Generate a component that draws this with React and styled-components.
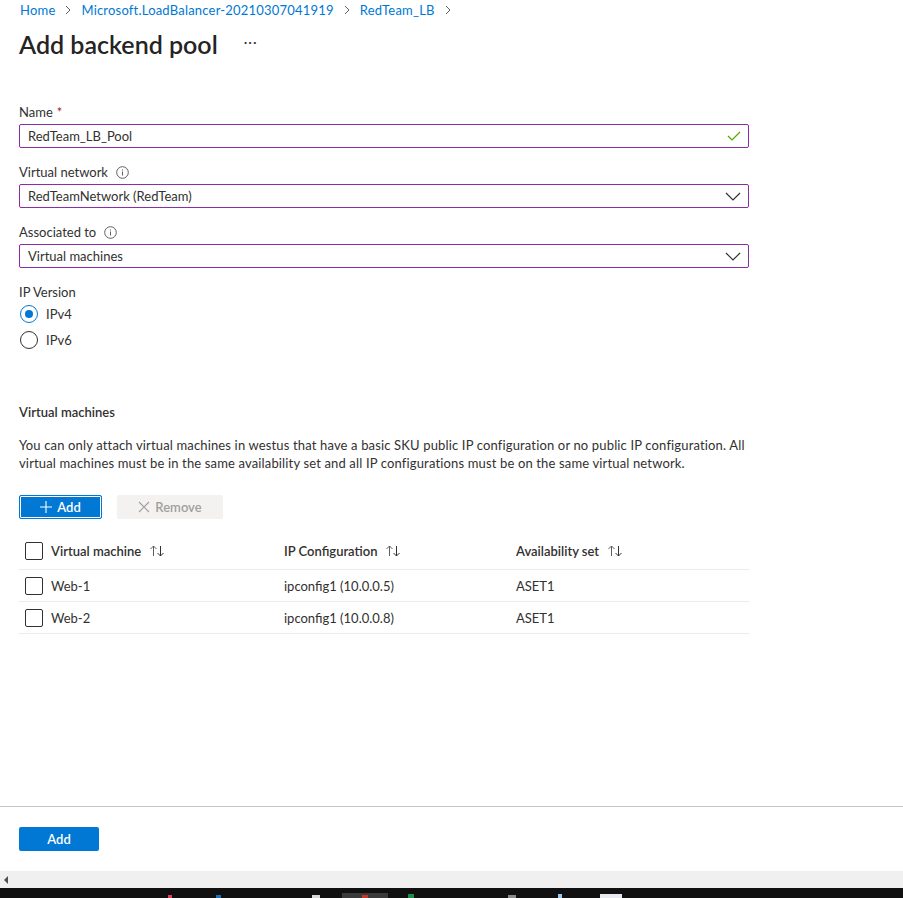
import React from "react";
import styled, { createGlobalStyle } from "styled-components";

const Global = createGlobalStyle`
  html, body { margin: 0; padding: 0; background: #fff; overflow: hidden; }
  body { font-family: "Segoe UI", Lato, "Open Sans", sans-serif; color: #323130; }
  * { box-sizing: border-box; }
`;

const Page = styled.div`
  width: 903px;
  height: 898px;
  display: flex;
  flex-direction: column;
`;

const Main = styled.div`
  flex: 1;
  padding: 0 19px;
`;

const Breadcrumb = styled.nav`
  display: flex;
  align-items: center;
  height: 20px;
  font-size: 13px;
  letter-spacing: 0.2px;
  color: #0078d4;
  padding-left: 1px;
  gap: 8px;
`;

const Sep = styled.span`
  color: #605e5c;
  display: flex;
  align-items: center;
`;

const TitleRow = styled.div`
  display: flex;
  align-items: center;
  height: 48px;
  gap: 26px;
`;

const Title = styled.h1`
  margin: 0;
  font-size: 25px;
  font-weight: 600;
  color: #252423;
`;

const More = styled.span`
  font-size: 14px;
  color: #323130;
  letter-spacing: 1px;
  margin-top: -6px;
`;

const Form = styled.div`
  margin-top: 34px;
  width: 730px;
  display: flex;
  flex-direction: column;
  gap: 14px;
`;

const Field = styled.div`
  display: flex;
  flex-direction: column;
  gap: 2px;
`;

const Label = styled.label`
  display: flex;
  align-items: center;
  gap: 8px;
  height: 20px;
  font-size: 13px;
  color: #323130;
`;

const Req = styled.span`
  color: #a4262c;
  margin-left: -4px;
`;

const Box = styled.div`
  height: 24px;
  border: 1px solid #8a2da6;
  border-radius: 2px;
  display: flex;
  align-items: center;
  justify-content: space-between;
  padding: 0 7px 0 8px;
  font-size: 13px;
  color: #323130;
`;

const RadioGroup = styled.div`
  display: flex;
  flex-direction: column;
  gap: 8px;
  margin-top: 1px;
`;

const RadioRow = styled.div`
  display: flex;
  align-items: center;
  gap: 8px;
  height: 18px;
  font-size: 13px;
  padding-left: 1px;
`;

const RadioCircle = styled.span`
  width: 18px;
  height: 18px;
  border-radius: 50%;
  border: 1px solid ${(p) => (p.$on ? "#0078d4" : "#323130")};
  display: flex;
  align-items: center;
  justify-content: center;
  &::after {
    content: "";
    width: 8px;
    height: 8px;
    border-radius: 50%;
    background: ${(p) => (p.$on ? "#0078d4" : "transparent")};
  }
`;

const Section = styled.div`
  margin-top: 53px;
  width: 730px;
`;

const H2 = styled.h2`
  margin: 0;
  font-size: 13px;
  font-weight: 600;
  height: 20px;
  line-height: 20px;
  color: #323130;
`;

const Para = styled.p`
  margin: 14px 0 0;
  font-size: 13px;
  line-height: 18px;
  letter-spacing: 0.15px;
  color: #323130;
`;

const Toolbar = styled.div`
  display: flex;
  gap: 15px;
  margin-top: 23px;
`;

const ToolBtn = styled.button`
  height: 24px;
  display: flex;
  align-items: center;
  justify-content: center;
  gap: 5px;
  font-family: inherit;
  font-size: 13px;
  font-weight: 600;
  border-radius: 2px;
  padding: 0;
  width: ${(p) => p.$w}px;
  ${(p) =>
    p.$primary
      ? `background:#0078d4;color:#fff;border:1px solid #0078d4;box-shadow: inset 0 0 0 1px #fff;`
      : `background:#f3f2f1;color:#a19f9d;border:1px solid #f3f2f1;`}
`;

const Table = styled.div`
  margin-top: 14px;
  width: 730px;
`;

const Row = styled.div`
  display: grid;
  grid-template-columns: 32px 233px 232px 1fr;
  align-items: center;
  height: ${(p) => (p.$head ? 37 : 32)}px;
  border-bottom: 1px solid #edebe9;
  font-size: 13px;
  font-weight: ${(p) => (p.$head ? 600 : 400)};
  color: #323130;
`;

const Check = styled.span`
  width: 18px;
  height: 18px;
  border: 1px solid #323130;
  border-radius: 2px;
  margin-left: 6px;
  display: block;
`;

const HeadCell = styled.span`
  display: flex;
  align-items: center;
  gap: 8px;
`;

const Footer = styled.div`
  border-top: 1px solid #c8c6c4;
  height: 65px;
  padding: 20px 19px 0;
`;

const FooterBtn = styled.button`
  width: 80px;
  height: 24px;
  background: #0078d4;
  color: #fff;
  border: none;
  border-radius: 2px;
  font-family: inherit;
  font-size: 13px;
  font-weight: 600;
`;

const HScroll = styled.div`
  height: 17px;
  background: #f0f0f0;
  display: flex;
  align-items: center;
  padding-left: 4px;
`;

const Taskbar = styled.div`
  height: 10px;
  background: #101010;
  position: relative;
`;

const TaskMark = styled.span`
  position: absolute;
  top: ${(p) => p.$t || 5}px;
  left: ${(p) => p.$x}px;
  width: ${(p) => p.$w}px;
  height: ${(p) => 10 - (p.$t || 5)}px;
  background: ${(p) => p.$c};
`;

const Chevron = () => (
  <svg width="10" height="10" viewBox="0 0 10 10">
    <path d="M3 1l4 4-4 4" fill="none" stroke="#605e5c" strokeWidth="1" />
  </svg>
);

const Info = () => (
  <svg width="13" height="13" viewBox="0 0 13 13">
    <circle cx="6.5" cy="6.5" r="5.8" fill="none" stroke="#605e5c" strokeWidth="1" />
    <rect x="6" y="5.5" width="1" height="4" fill="#605e5c" />
    <rect x="6" y="3.4" width="1" height="1.1" fill="#605e5c" />
  </svg>
);

const Down = () => (
  <svg width="16" height="10" viewBox="0 0 16 10">
    <path d="M1 2l7 7 7-7" fill="none" stroke="#323130" strokeWidth="1.2" />
  </svg>
);

const Tick = () => (
  <svg width="14" height="10" viewBox="0 0 14 10">
    <path d="M1 5l4 4 8-8" fill="none" stroke="#57a300" strokeWidth="1.2" />
  </svg>
);

const Sort = () => (
  <svg width="17" height="14" viewBox="0 0 17 14">
    <path d="M4.5 12V2M1.5 5l3-3 3 3" fill="none" stroke="#605e5c" strokeWidth="1" />
    <path d="M11.5 2v10M8.5 9l3 3 3-3" fill="none" stroke="#323130" strokeWidth="1" />
  </svg>
);

const Plus = () => (
  <svg width="12" height="12" viewBox="0 0 12 12">
    <path d="M6 0v12M0 6h12" stroke="#fff" strokeWidth="1.1" />
  </svg>
);

const Cross = () => (
  <svg width="12" height="12" viewBox="0 0 12 12">
    <path d="M1 1l10 10M11 1L1 11" stroke="#a19f9d" strokeWidth="1.1" />
  </svg>
);

const LeftArrow = () => (
  <svg width="5" height="8" viewBox="0 0 5 8">
    <path d="M4 0v8L0 4z" fill="#505050" />
  </svg>
);

const rows = [
  ["Web-1", "ipconfig1 (10.0.0.5)", "ASET1"],
  ["Web-2", "ipconfig1 (10.0.0.8)", "ASET1"],
];

export default function App() {
  return (
    <Page>
      <Global />
      <Main>
        <Breadcrumb>
          <span>Home</span>
          <Sep><Chevron /></Sep>
          <span>Microsoft.LoadBalancer-20210307041919</span>
          <Sep><Chevron /></Sep>
          <span>RedTeam_LB</span>
          <Sep><Chevron /></Sep>
        </Breadcrumb>
        <TitleRow>
          <Title>Add backend pool</Title>
          <More>···</More>
        </TitleRow>
        <Form>
          <Field>
            <Label>Name <Req>*</Req></Label>
            <Box>RedTeam_LB_Pool<Tick /></Box>
          </Field>
          <Field>
            <Label>Virtual network <Info /></Label>
            <Box>RedTeamNetwork (RedTeam)<Down /></Box>
          </Field>
          <Field>
            <Label>Associated to <Info /></Label>
            <Box>Virtual machines<Down /></Box>
          </Field>
          <Field>
            <Label>IP Version</Label>
            <RadioGroup>
              <RadioRow><RadioCircle $on />IPv4</RadioRow>
              <RadioRow><RadioCircle />IPv6</RadioRow>
            </RadioGroup>
          </Field>
        </Form>
        <Section>
          <H2>Virtual machines</H2>
          <Para>
            You can only attach virtual machines in westus that have a basic SKU public IP configuration or no public IP configuration. All virtual machines must be in the same availability set and all IP configurations must be on the same virtual network.
          </Para>
          <Toolbar>
            <ToolBtn $primary $w={83}><Plus />Add</ToolBtn>
            <ToolBtn $w={106}><Cross />Remove</ToolBtn>
          </Toolbar>
          <Table>
            <Row $head>
              <Check />
              <HeadCell>Virtual machine <Sort /></HeadCell>
              <HeadCell>IP Configuration <Sort /></HeadCell>
              <HeadCell>Availability set <Sort /></HeadCell>
            </Row>
            {rows.map((r) => (
              <Row key={r[0]}>
                <Check />
                <span>{r[0]}</span>
                <span>{r[1]}</span>
                <span>{r[2]}</span>
              </Row>
            ))}
          </Table>
        </Section>
      </Main>
      <Footer>
        <FooterBtn>Add</FooterBtn>
      </Footer>
      <HScroll><LeftArrow /></HScroll>
      <Taskbar>
        <TaskMark $x={168} $w={4} $c="#e0405a" $t={7} />
        <TaskMark $x={216} $w={5} $c="#1f6fb5" $t={7} />
        <TaskMark $x={312} $w={8} $c="#d8d8d8" $t={7} />
        <TaskMark $x={342} $w={46} $c="#3a3a3a" $t={0} />
        <TaskMark $x={362} $w={6} $c="#c0392b" $t={7} />
        <TaskMark $x={408} $w={6} $c="#1d8b4a" $t={6} />
        <TaskMark $x={508} $w={8} $c="#8a8a8a" $t={7} />
        <TaskMark $x={558} $w={4} $c="#9ec6e8" $t={6} />
        <TaskMark $x={600} $w={22} $c="#e8e8f0" $t={6} />
      </Taskbar>
    </Page>
  );
}
